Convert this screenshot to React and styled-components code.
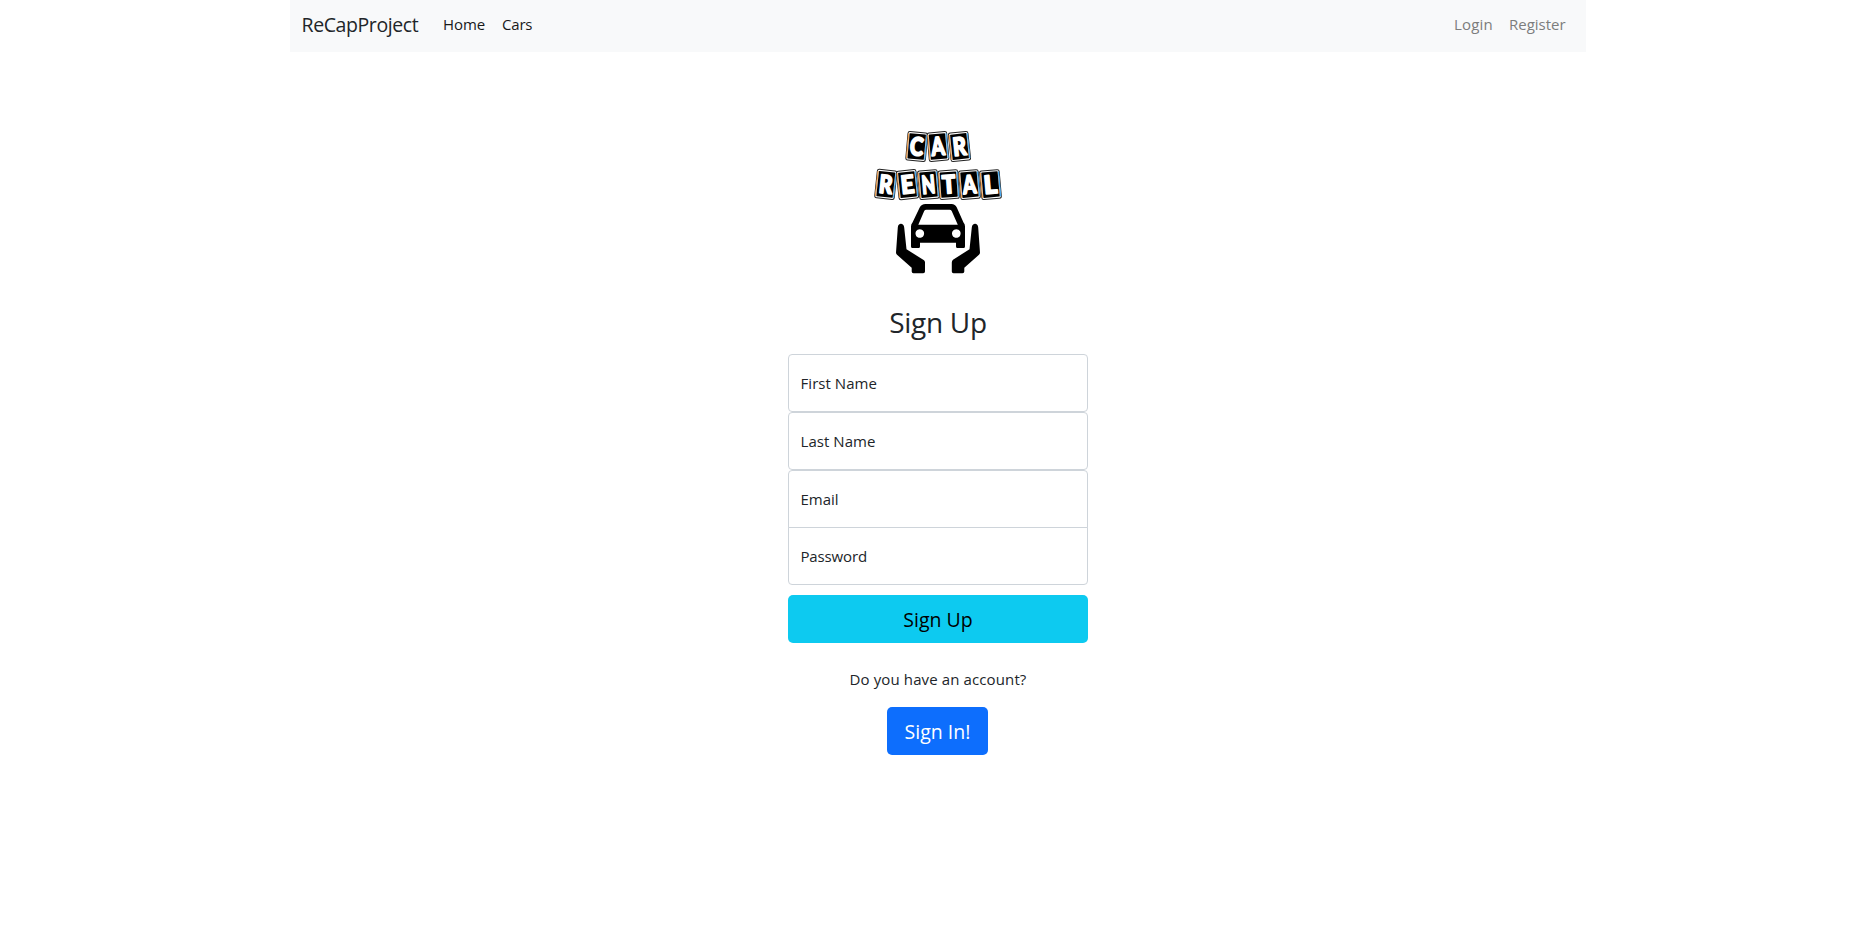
import React from "react";
import styled, { createGlobalStyle } from "styled-components";

const GlobalStyle = createGlobalStyle`
  * { box-sizing: border-box; }
  body {
    margin: 0;
    background: #fff;
    color: #212529;
    font-family: "Segoe UI", "Open Sans", "Noto Sans", sans-serif;
    font-size: 15px;
    line-height: 24px;
  }
`;

const Container = styled.div`
  width: 1296px;
  margin: 0 auto 0 290px;
`;

const Navbar = styled.nav`
  display: flex;
  align-items: center;
  height: 52px;
  padding: 0 12px 4px;
  background: #f8f9fa;
  white-space: nowrap;
`;

const Brand = styled.a`
  width: 117px;
  margin-right: 16px;
  padding-top: 1px;
  font-size: 19.5px;
  line-height: 30px;
  letter-spacing: -0.4px;
  text-indent: -0.5px;
`;

const NavGroup = styled.div`
  display: flex;
  margin-left: ${(p) => (p.$end ? "auto" : "0")};
`;

const NavLink = styled.a`
  width: ${(p) => p.$width}px;
  padding: 0 8px;
  letter-spacing: ${(p) => p.$spacing || 0}px;
  color: ${(p) => (p.$muted ? "#7c7d7d" : "#191a1a")};
`;

const Main = styled.main`
  display: flex;
  flex-direction: column;
  align-items: center;
  padding-top: 68px;
`;

const Logo = styled.svg`
  display: block;
  width: 150px;
  height: 165px;
  margin-left: 4px;
`;

const Form = styled.form`
  display: flex;
  flex-direction: column;
  width: 300px;
  margin-top: 17px;
`;

const Title = styled.h1`
  margin: 0 0 11px;
  font-size: 28px;
  line-height: 41px;
  font-weight: 400;
  text-align: center;
  letter-spacing: -0.3px;
`;

const Field = styled.label`
  display: flex;
  align-items: center;
  height: 58px;
  padding: 0 11.5px;
  border: 1px solid #ced4da;
  border-radius: ${(p) => p.$radius || "4px"};
  margin-bottom: ${(p) => p.$gap || 0}px;
  letter-spacing: ${(p) => p.$spacing || 0}px;
`;

const Button = styled.button`
  height: 48px;
  width: ${(p) => p.$width};
  margin-right: ${(p) => (p.$primary ? "1px" : "0")};
  padding: 1px 0 0;
  border: 0;
  border-radius: 5px;
  background: ${(p) => (p.$primary ? "#0d6efd" : "#0dcaf0")};
  color: ${(p) => (p.$primary ? "#fff" : "#000")};
  font: inherit;
  font-size: 19.5px;
  letter-spacing: 0;
`;

const Prompt = styled.p`
  margin: 24px 0 16px;
  letter-spacing: 0.12px;
`;

const TileLetter = styled.text`
  font-family: "Lato", sans-serif;
  font-size: 25px;
  font-weight: 900;
  fill: #fff;
  stroke: #fff;
  stroke-width: 1.8px;
  stroke-linejoin: round;
  text-anchor: middle;
`;

const tiles = [
  { letter: "C", x: 51.7, y: 26.5, turn: 5 },
  { letter: "A", x: 73, y: 26.5, turn: -5 },
  { letter: "R", x: 94.5, y: 26.5, turn: -6 },
  { letter: "R", x: 20.8, y: 64.4, turn: 6 },
  { letter: "E", x: 42.5, y: 64.6, turn: -6 },
  { letter: "N", x: 63.5, y: 64.6, turn: -5 },
  { letter: "T", x: 83.7, y: 64.6, turn: -4 },
  { letter: "A", x: 104.5, y: 64.6, turn: -5 },
  { letter: "L", x: 125.5, y: 64.6, turn: -5 },
];

function Tile({ letter, x, y, turn }) {
  return (
    <g transform={`translate(${x} ${y}) rotate(${turn})`}>
      <rect x="-9.8" y="-14.3" width="19.6" height="28.6" rx="2" fill="#fff" stroke="#222" strokeWidth="1" />
      <path d="M-9.100 -12.500v25" stroke="#f0a050" strokeWidth="1.2" />
      <path d="M9.100 -12.500v25" stroke="#45a8f0" strokeWidth="1.2" />
      <rect x="-8.2" y="-12.7" width="16.4" height="25.4" rx=".6" fill="#000" />
      <TileLetter y="8.8" textLength="13.4" lengthAdjust="spacingAndGlyphs">{letter}</TileLetter>
    </g>
  );
}

function RentalLogo() {
  return (
    <Logo viewBox="0 0 150 165" aria-label="Car rental">
      {tiles.map((t, i) => (
        <Tile key={i} {...t} />
      ))}
      <path
        fillRule="evenodd"
        d="M60.5 84H86.5C89 84 90.8 85.3 91.8 87.5L98.5 102.5Q100 104 100 106.500V126.500Q100 128 98.500 128H92.500Q91 128 91 126.500V122.700H55V126.500Q55 128 53.500 128H47.500Q46 128 46 126.500V106.500Q46 104 47.500 102.500L54.700 87.500C55.800 85.300 57.800 84 60.500 84ZM61.300 89.700Q59.800 89.700 59.200 91L53.300 104.800H92.800L86.700 91Q86.100 89.700 84.600 89.700ZM54.800 109.200a4.300 4.300 0 1 0 .01 0ZM91.300 109.200a4.300 4.300 0 1 0 .01 0Z"
      />
      <path d="M32.800 107.500C33 102.500 38.800 102.500 39.200 107.500L41.500 129.300L59 140.200Q60 141 60 142.500V151.500Q60 153.300 58.200 153.300H48.500Q46.700 153.300 46.700 151.500V147.800L32 134.800Q31 133.800 31 132.500Z" />
      <path d="M113.200 107.500C113 102.500 107.200 102.500 106.800 107.500L104.500 129.300L88 139.700Q86.800 140.700 86.800 142.500V151.500Q86.800 153.300 88.500 153.300H97.500Q99.300 153.300 99.300 151.500V147.800L114 134.800Q115 133.800 115 132.500Z" />
    </Logo>
  );
}

export default function App() {
  return (
    <>
      <GlobalStyle />
      <Container>
        <Navbar>
          <Brand>ReCapProject</Brand>
          <NavGroup>
            <NavLink $width={59} $spacing={-0.05}>Home</NavLink>
            <NavLink $width={47} $spacing={-0.2}>Cars</NavLink>
          </NavGroup>
          <NavGroup $end>
            <NavLink $muted $width={55} $spacing={0.2}>Login</NavLink>
            <NavLink $muted $width={73}>Register</NavLink>
          </NavGroup>
        </Navbar>
        <Main>
          <RentalLogo />
          <Form>
            <Title>Sign Up</Title>
            <Field $spacing={0.05}>First Name</Field>
            <Field $spacing={0.05}>Last Name</Field>
            <Field $radius="4px 4px 0 0" $gap={-1}>Email</Field>
            <Field $radius="0 0 4px 4px" $gap={10} $spacing={-0.15}>Password</Field>
            <Button type="button" $width="100%">Sign Up</Button>
          </Form>
          <Prompt>Do you have an account?</Prompt>
          <Button type="button" $primary $width="101px">Sign In!</Button>
        </Main>
      </Container>
    </>
  );
}
